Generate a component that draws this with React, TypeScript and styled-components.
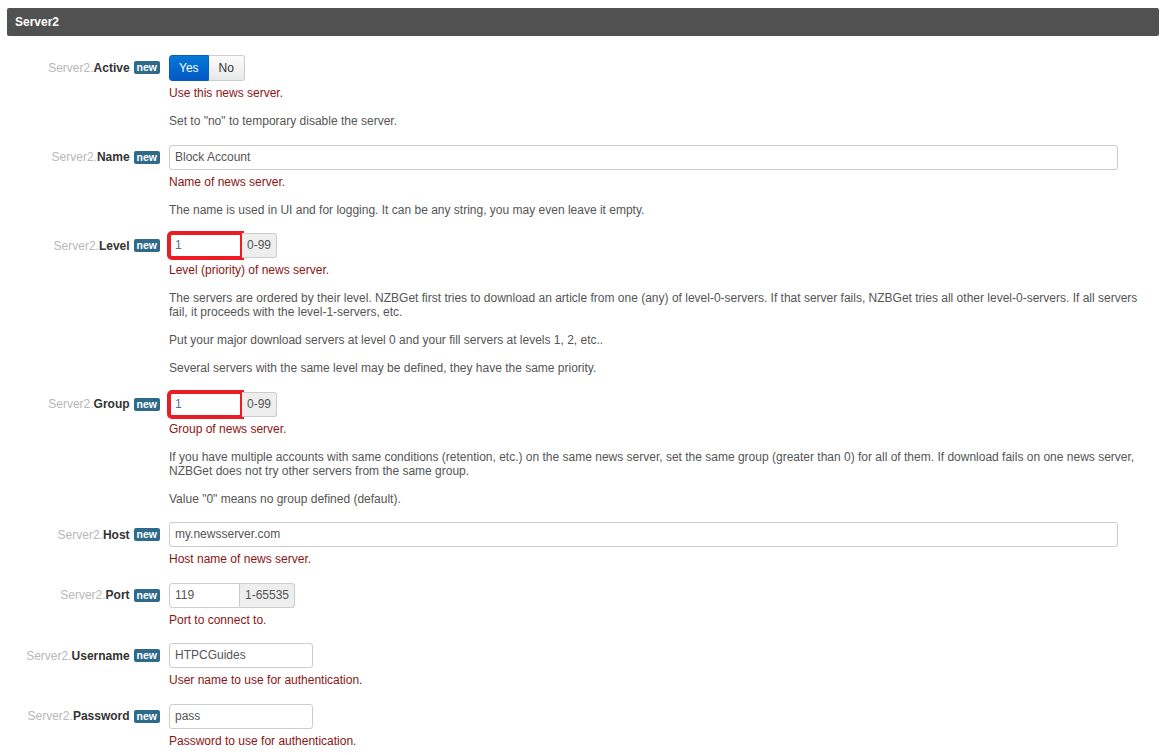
import * as React from "react";
import styled, { createGlobalStyle, css } from "styled-components";

const GlobalStyle = createGlobalStyle`
  html, body {
    margin: 0;
    padding: 0;
    background: #fff;
  }
  body {
    font-family: "Liberation Sans", Arial, sans-serif;
    font-size: 12px;
    color: #555;
  }
`;

const Page = styled.div`
  padding: 8px 9px 0 7px;
`;

const SectionHeader = styled.div`
  height: 28px;
  line-height: 28px;
  background: #515151;
  border-radius: 2px;
  color: #fff;
  font-weight: 700;
  font-size: 12px;
  padding-left: 8px;
  margin-bottom: 19px;
`;

const Row = styled.div`
  display: flex;
  align-items: flex-start;
  margin-bottom: 16.5px;
`;

const LabelCell = styled.div`
  width: 153px;
  flex-shrink: 0;
  display: flex;
  justify-content: flex-end;
  align-items: center;
  height: 25px;
  margin-right: 9px;
  white-space: nowrap;
`;

const Prefix = styled.span`
  color: #b8b8b8;
`;

const OptionName = styled.span`
  color: #333;
  font-weight: 700;
`;

const Badge = styled.span`
  display: inline-block;
  margin-left: 4px;
  background: #2f6a8b;
  color: #fff;
  font-weight: 700;
  font-size: 10.5px;
  line-height: 13px;
  height: 13px;
  padding: 0 3px;
  border-radius: 2px;
`;

const ControlCell = styled.div`
  flex: 1;
  min-width: 0;
`;

const InputGroup = styled.div`
  display: flex;
  height: 25px;
`;

const TextInput = styled.div<{ $width: number; $marked?: boolean; $attached?: boolean }>`
  box-sizing: border-box;
  width: ${(p) => p.$width}px;
  height: 25px;
  line-height: 23px;
  border: 1px solid #ccc;
  border-radius: ${(p) => (p.$attached ? "3px 0 0 3px" : "3px")};
  padding: 0 5px;
  color: #555;
  background: #fff;
  ${(p) =>
    p.$marked &&
    css`
      outline: 4px solid #ec1c24;
      outline-offset: -2px;
      color: #52709c;
    `}
`;

const AddOn = styled.div`
  box-sizing: border-box;
  height: 25px;
  line-height: 23px;
  padding: 0 5px;
  background: #eee;
  border: 1px solid #ccc;
  border-left: none;
  border-radius: 0 3px 3px 0;
  color: #555;
`;

const Toggle = styled.div`
  display: flex;
  height: 26px;
`;

const ToggleButton = styled.div<{ $active?: boolean }>`
  box-sizing: border-box;
  height: 26px;
  line-height: 24px;
  padding: 0 ${(p) => (p.$active ? 9 : 10)}px;
  border: 1px solid ${(p) => (p.$active ? "#0a5cc2" : "#ccc")};
  color: ${(p) => (p.$active ? "#fff" : "#333")};
  background: ${(p) =>
    p.$active
      ? "linear-gradient(to bottom, #0879d6, #0058c6)"
      : "linear-gradient(to bottom, #fcfcfc, #e8e8e8)"};
  border-radius: 0 3px 3px 0;
  &:first-child {
    border-radius: 3px 0 0 3px;
  }
  & + & {
    border-left: none;
  }
`;

const Help = styled.div`
  margin-top: 5px;
  max-width: 981px;
  line-height: 14px;
  color: #555;

  p {
    margin: 0 0 14px;
  }
  p:last-child {
    margin-bottom: 0;
  }
`;

const HelpTitle = styled.p`
  color: #8b1414;
`;

type Option = {
  name: string;
  title: string;
  help?: string[];
  control: React.ReactNode;
};

const Label = ({ name }: { name: string }) => (
  <LabelCell>
    <Prefix>Server2.</Prefix>
    <OptionName>{name}</OptionName>
    <Badge>new</Badge>
  </LabelCell>
);

const options: Option[] = [
  {
    name: "Active",
    title: "Use this news server.",
    help: ['Set to "no" to temporary disable the server.'],
    control: (
      <Toggle>
        <ToggleButton $active>Yes</ToggleButton>
        <ToggleButton>No</ToggleButton>
      </Toggle>
    ),
  },
  {
    name: "Name",
    title: "Name of news server.",
    help: ["The name is used in UI and for logging. It can be any string, you may even leave it empty."],
    control: <TextInput $width={949}>Block Account</TextInput>,
  },
  {
    name: "Level",
    title: "Level (priority) of news server.",
    help: [
      "The servers are ordered by their level. NZBGet first tries to download an article from one (any) of level-0-servers. If that server fails, NZBGet tries all other level-0-servers. If all servers fail, it proceeds with the level-1-servers, etc.",
      "Put your major download servers at level 0 and your fill servers at levels 1, 2, etc..",
      "Several servers with the same level may be defined, they have the same priority.",
    ],
    control: (
      <InputGroup>
        <TextInput $width={73} $marked $attached>
          1
        </TextInput>
        <AddOn>0-99</AddOn>
      </InputGroup>
    ),
  },
  {
    name: "Group",
    title: "Group of news server.",
    help: [
      "If you have multiple accounts with same conditions (retention, etc.) on the same news server, set the same group (greater than 0) for all of them. If download fails on one news server, NZBGet does not try other servers from the same group.",
      'Value "0" means no group defined (default).',
    ],
    control: (
      <InputGroup>
        <TextInput $width={73} $marked $attached>
          1
        </TextInput>
        <AddOn>0-99</AddOn>
      </InputGroup>
    ),
  },
  {
    name: "Host",
    title: "Host name of news server.",
    control: <TextInput $width={949}>my.newsserver.com</TextInput>,
  },
  {
    name: "Port",
    title: "Port to connect to.",
    control: (
      <InputGroup>
        <TextInput $width={71} $attached>
          119
        </TextInput>
        <AddOn>1-65535</AddOn>
      </InputGroup>
    ),
  },
  {
    name: "Username",
    title: "User name to use for authentication.",
    control: <TextInput $width={144}>HTPCGuides</TextInput>,
  },
  {
    name: "Password",
    title: "Password to use for authentication.",
    control: <TextInput $width={144}>pass</TextInput>,
  },
];

export default function App() {
  return (
    <>
      <GlobalStyle />
      <Page>
        <SectionHeader>Server2</SectionHeader>
        {options.map((o) => (
          <Row key={o.name}>
            <Label name={o.name} />
            <ControlCell>
              {o.control}
              <Help>
                <HelpTitle>{o.title}</HelpTitle>
                {o.help?.map((t, i) => (
                  <p key={i}>{t}</p>
                ))}
              </Help>
            </ControlCell>
          </Row>
        ))}
      </Page>
    </>
  );
}
